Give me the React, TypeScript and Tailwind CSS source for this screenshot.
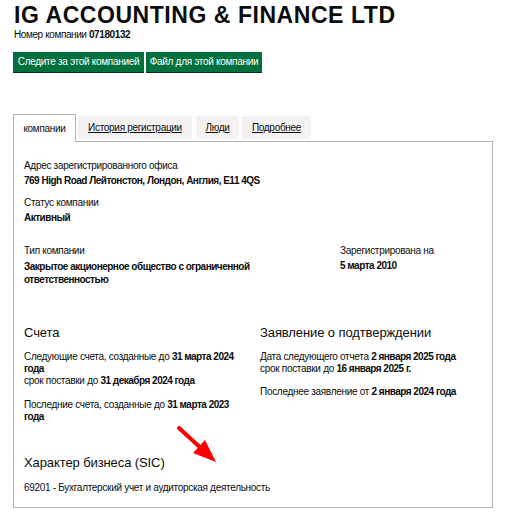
import React from "react";

export default function App() {
  const lbl = "text-[10px] leading-[12px] tracking-[-0.3px]";
  const val = "text-[10px] leading-[12px] font-bold tracking-[-0.5px]";
  return (
    <div className="bg-white w-[524px] h-[512px] overflow-hidden text-[#0b0c0c]" style={{ fontFamily: '"Liberation Sans", Arial, sans-serif' }}>
      <div className="pl-[13px] pt-[3px]">
        <h1 className="text-[23px] font-bold leading-[24px] tracking-[0.55px] pl-px">IG ACCOUNTING &amp; FINANCE LTD</h1>
        <p className="text-[10px] leading-[12px] mt-[2px] pl-[1px] tracking-[-0.4px]">Номер компании <span className="font-bold">07180132</span></p>
        <div className="flex gap-[2px] mt-[11px]">
          <button className="bg-[#00703c] text-white text-[10px] h-[20px] w-[131px] shadow-[0_1px_0_#002d18] leading-[20px] tracking-[-0.3px]">Следите за этой компанией</button>
          <button className="bg-[#00703c] text-white text-[10px] h-[20px] w-[116px] shadow-[0_1px_0_#002d18] leading-[20px] tracking-[-0.3px]">Файл для этой компании</button>
        </div>

        <div className="mt-[42px] w-[480px]">
          <div className="flex items-end gap-[2px] relative z-10">
            <div className="h-[28px] w-[63px] border border-b-0 border-[#b1b4b6] bg-white flex items-center justify-center text-[10px] -mb-px pb-[1px] tracking-[-0.3px]">компании</div>
            <div className="h-[23px] w-[114px] bg-[#f3f2f1] flex items-center justify-center text-[10px] underline mb-[2px] tracking-[-0.3px]">История регистрации</div>
            <div className="h-[23px] w-[43px] bg-[#f3f2f1] flex items-center justify-center text-[10px] underline mb-[2px] ml-[2px] tracking-[-0.3px]">Люди</div>
            <div className="h-[23px] w-[69px] bg-[#f3f2f1] flex items-center justify-center text-[10px] underline mb-[2px] ml-px tracking-[-0.3px]">Подробнее</div>
          </div>
          <div className="border border-[#b1b4b6] h-[367px] pl-[10px] pt-[18px] relative">
            <div className={lbl}>Адрес зарегистрированного офиса</div>
            <div className={`${val} mt-[3px]`}>769 High Road Лейтонстон, Лондон, Англия, E11 4QS</div>
            <div className={`${lbl} mt-[10px]`}>Статус компании</div>
            <div className={`${val} mt-[3px]`}>Активный</div>

            <div className="flex mt-[21px]">
              <div className="w-[316px]">
                <div className={lbl}>Тип компании</div>
                <div className={`${val} leading-[13px] mt-[3px] w-[240px]`}>Закрытое акционерное общество с ограниченной ответственностью</div>
              </div>
              <div>
                <div className={lbl}>Зарегистрирована на</div>
                <div className={`${val} mt-[3px]`}>5 марта 2010</div>
              </div>
            </div>

            <div className="flex mt-[39px]">
              <div className="w-[236px] pr-[12px]">
                <h2 className="text-[13px] leading-[16px] tracking-[-0.1px]">Счета</h2>
                <p className={`${lbl} mt-[10px]`}>Следующие счета, созданные до <b className="tracking-[-0.5px]">31 марта 2024</b><br /><b className="tracking-[-0.5px]">года</b><br />срок поставки до <b className="tracking-[-0.5px]">31 декабря 2024 года</b></p>
                <p className={`${lbl} mt-[12px]`}>Последние счета, созданные до <b className="tracking-[-0.5px]">31 марта 2023</b><br /><b className="tracking-[-0.5px]">года</b></p>
              </div>
              <div>
                <h2 className="text-[13px] leading-[16px] tracking-[-0.1px]">Заявление о подтверждении</h2>
                <p className={`${lbl} mt-[10px]`}>Дата следующего отчета <b className="tracking-[-0.5px]">2 января 2025 года</b><br />срок поставки до <b className="tracking-[-0.5px]">16 января 2025 г.</b></p>
                <p className={`${lbl} mt-[11px]`}>Последнее заявление от <b className="tracking-[-0.5px]">2 января 2024 года</b></p>
              </div>
            </div>

            <h2 className="text-[13px] leading-[16px] tracking-[-0.1px] mt-[32px]">Характер бизнеса (SIC)</h2>
            <p className={`${lbl} mt-[11px]`}>69201 - Бухгалтерский учет и аудиторская деятельность</p>

            <svg className="absolute left-[163px] top-[284px]" width="42" height="40" viewBox="0 0 42 40">
              <line x1="2" y1="2" x2="27" y2="25" stroke="#ff0000" strokeWidth="4" strokeLinecap="round" />
              <polygon points="39,36 16,27 28,14" fill="#ff0000" />
            </svg>
          </div>
        </div>
      </div>
    </div>
  );
}
